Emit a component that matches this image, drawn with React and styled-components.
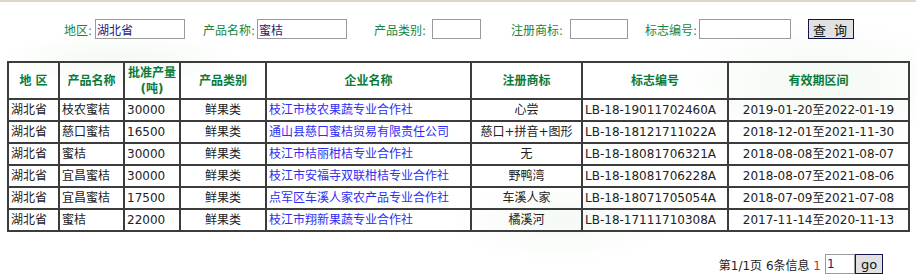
import React from 'react'
import styled, { createGlobalStyle } from 'styled-components'

const GlobalStyle = createGlobalStyle`
  html, body {
    margin: 0;
    padding: 0;
    background: #fff;
  }
  body {
    font-family: "DejaVu Sans", "Noto Sans CJK SC", sans-serif;
    font-size: 12px;
    color: #222;
  }
`

const Page = styled.div`
  width: 916px;
  min-height: 278px;
  box-sizing: border-box;
  border-top: 2px solid #dcd8c3;
  padding: 0 0 0 7px;
  background:
    radial-gradient(ellipse 180px 40px at 120px 58px, rgba(220, 238, 220, 0.35), transparent 70%),
    radial-gradient(ellipse 220px 90px at 820px 80px, rgba(220, 238, 220, 0.35), transparent 70%),
    radial-gradient(ellipse 160px 60px at 560px 220px, rgba(220, 238, 220, 0.3), transparent 70%),
    #fff;
`

const SearchBar = styled.form`
  display: flex;
  align-items: center;
  height: 20px;
  margin: 17px 0 0 0;
`

const Field = styled.label`
  display: flex;
  align-items: center;
  margin-left: ${p => p.$gap}px;
`

const FieldLabel = styled.span`
  width: ${p => p.$w}px;
  color: #17843f;
  font-size: 12px;
  white-space: nowrap;
`

const TextInput = styled.input`
  box-sizing: border-box;
  width: ${p => p.$w}px;
  height: 20px;
  margin: 0;
  padding: 0 1px;
  border: 1px solid #9a9a9a;
  background: #fff;
  color: #1c1c78;
  font-family: "DejaVu Sans", "Noto Sans CJK SC", sans-serif;
  font-size: 12px;
  outline: none;
`

const Button = styled.button`
  box-sizing: border-box;
  width: ${p => p.$w}px;
  height: 20px;
  margin: 0 0 0 ${p => p.$gap || 0}px;
  padding: 0;
  border: 1px solid #15154d;
  background: #e1e1e1;
  color: #111;
  font-family: "DejaVu Sans", "Noto Sans CJK SC", sans-serif;
  font-size: 13px;
  letter-spacing: ${p => p.$spacing || 0}px;
  cursor: pointer;
`

const Table = styled.table`
  width: 903px;
  margin-top: 22px;
  border: 1px solid #3c3c3c;
  border-spacing: 0;
  table-layout: fixed;
`

const Th = styled.th`
  box-sizing: border-box;
  width: ${p => p.$w}px;
  height: 37px;
  padding: 0 2px;
  border: 1px solid #3c3c3c;
  color: #0a7a3a;
  font-size: 12px;
  font-weight: bold;
  line-height: 16px;
  text-align: center;
  vertical-align: middle;
`

const Td = styled.td`
  box-sizing: border-box;
  height: 22px;
  padding: 0 2px;
  border: 1px solid #3c3c3c;
  font-size: 12px;
  line-height: 20px;
  text-align: ${p => (p.$center ? 'center' : 'left')};
  white-space: nowrap;
  overflow: hidden;
`

const CompanyLink = styled.a`
  color: #2e2ef5;
  text-decoration: none;
`

const Pager = styled.div`
  display: flex;
  justify-content: flex-end;
  align-items: center;
  width: 876px;
  margin-top: 22px;
  font-size: 12px;
  color: #222;
`

const PageInfo = styled.span`
  white-space: pre;
  margin-right: 4px;
`

const Current = styled.span`
  color: #f01818;
`

const columns = [
  { title: '地 区', w: 51 },
  { title: '产品名称', w: 65 },
  { title: ['批准产量', '(吨)'], w: 56 },
  { title: '产品类别', w: 86 },
  { title: '企业名称', w: 205 },
  { title: '注册商标', w: 111 },
  { title: '标志编号', w: 146 },
  { title: '有效期区间', w: 181 },
]

const rows = [
  ['湖北省', '枝农蜜桔', '30000', '鲜果类', '枝江市枝农果蔬专业合作社', '心尝', 'LB-18-19011702460A', '2019-01-20至2022-01-19'],
  ['湖北省', '慈口蜜桔', '16500', '鲜果类', '通山县慈口蜜桔贸易有限责任公司', '慈口+拼音+图形', 'LB-18-18121711022A', '2018-12-01至2021-11-30'],
  ['湖北省', '蜜桔', '30000', '鲜果类', '枝江市桔丽柑桔专业合作社', '无', 'LB-18-18081706321A', '2018-08-08至2021-08-07'],
  ['湖北省', '宜昌蜜桔', '30000', '鲜果类', '枝江市安福寺双联柑桔专业合作社', '野鸭湾', 'LB-18-18081706228A', '2018-08-07至2021-08-06'],
  ['湖北省', '宜昌蜜桔', '17500', '鲜果类', '点军区车溪人家农产品专业合作社', '车溪人家', 'LB-18-18071705054A', '2018-07-09至2021-07-08'],
  ['湖北省', '蜜桔', '22000', '鲜果类', '枝江市翔新果蔬专业合作社', '橘溪河', 'LB-18-17111710308A', '2017-11-14至2020-11-13'],
]

const fields = [
  { label: '地区:', gap: 57, lw: 31, iw: 90, value: '湖北省' },
  { label: '产品名称:', gap: 18, lw: 54, iw: 90, value: '蜜桔' },
  { label: '产品类别:', gap: 27, lw: 58, iw: 49, value: '' },
  { label: '注册商标:', gap: 30, lw: 59, iw: 58, value: '' },
  { label: '标志编号:', gap: 17, lw: 54, iw: 92, value: '' },
]

export default function App() {
  return (
    <>
      <GlobalStyle />
      <Page>
        <SearchBar onSubmit={e => e.preventDefault()}>
          {fields.map(f => (
            <Field key={f.label} $gap={f.gap}>
              <FieldLabel $w={f.lw}>{f.label}</FieldLabel>
              <TextInput $w={f.iw} defaultValue={f.value} />
            </Field>
          ))}
          <Button type="submit" $w={46} $gap={17} $spacing={2}>查 询</Button>
        </SearchBar>

        <Table>
          <thead>
            <tr>
              {columns.map((c, i) => (
                <Th key={i} $w={c.w}>
                  {Array.isArray(c.title) ? (
                    <>
                      {c.title[0]}
                      <br />
                      {c.title[1]}
                    </>
                  ) : (
                    c.title
                  )}
                </Th>
              ))}
            </tr>
          </thead>
          <tbody>
            {rows.map((r, i) => (
              <tr key={i}>
                <Td>{r[0]}</Td>
                <Td>{r[1]}</Td>
                <Td>{r[2]}</Td>
                <Td $center>{r[3]}</Td>
                <Td>
                  <CompanyLink href="#">{r[4]}</CompanyLink>
                </Td>
                <Td $center>{r[5]}</Td>
                <Td>{r[6]}</Td>
                <Td $center>{r[7]}</Td>
              </tr>
            ))}
          </tbody>
        </Table>

        <Pager>
          <PageInfo>
            第1/1页 6条信息 <Current>1</Current>
          </PageInfo>
          <TextInput $w={30} defaultValue="1" />
          <Button type="button" $w={28}>go</Button>
        </Pager>
      </Page>
    </>
  )
}
